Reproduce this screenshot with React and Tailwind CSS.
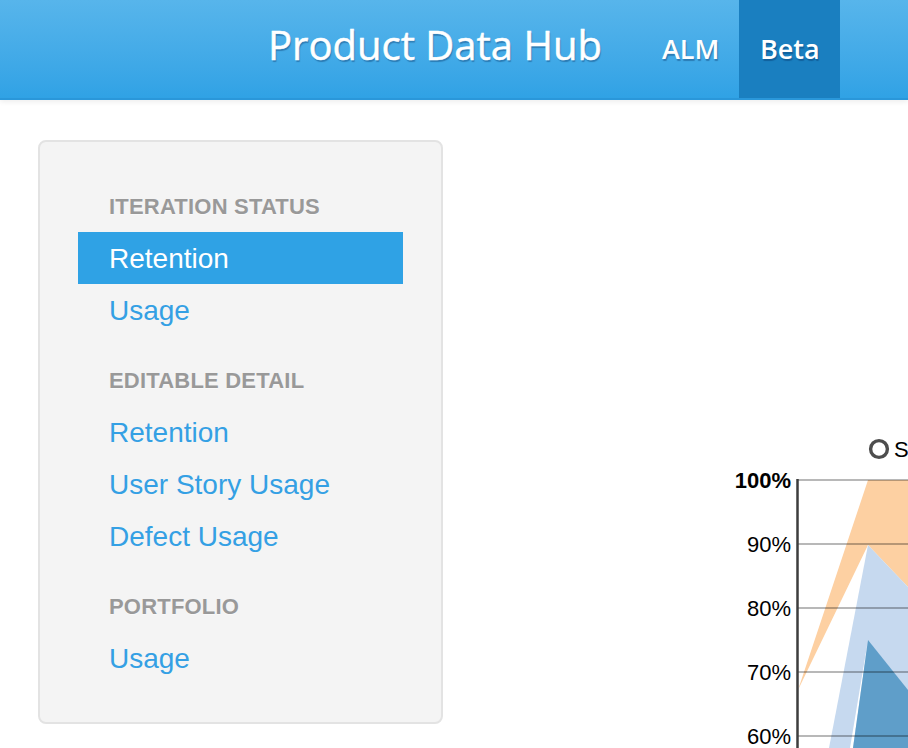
import React from "react";

const sections = [
  { title: "ITERATION STATUS", items: [{ label: "Retention", active: true }, { label: "Usage" }] },
  { title: "EDITABLE DETAIL", items: [{ label: "Retention" }, { label: "User Story Usage" }, { label: "Defect Usage" }] },
  { title: "PORTFOLIO", items: [{ label: "Usage" }] },
];

function Chart() {
  const grid = [480, 544, 608, 672, 736];
  const labels = ["100%", "90%", "80%", "70%", "60%"];
  return (
    <svg width="208" height="328" viewBox="700 420 208 328" className="block">
      <polygon points="798,690 868,480 908,480 908,587 868,545" fill="#fdd0a2" />
      <polygon points="868,545 908,587 908,748 829,748" fill="#c6d9ef" />
      <polygon points="868,640 850,748 853,748" fill="#ffffff" />
      <polygon points="868,640 908,690 908,748 853,748" fill="#5f9ec9" />
      {grid.map((y) => (
        <line key={y} x1="798" x2="908" y1={y} y2={y} stroke="rgba(0,0,0,0.28)" strokeWidth="2" />
      ))}
      <line x1="797.5" x2="797.5" y1="479" y2="748" stroke="#3d3d3d" strokeWidth="2.5" />
      {labels.map((t, i) => (
        <text
          key={t}
          x="791"
          y={grid[i] + 8}
          textAnchor="end"
          fontFamily="'Liberation Sans', Arial, sans-serif"
          fontSize="22"
          fontWeight={i === 0 ? "bold" : "normal"}
          fill="#000"
        >
          {t}
        </text>
      ))}
      <circle cx="879" cy="449" r="8.4" fill="#fff" stroke="#4d4d4d" strokeWidth="3.4" />
      <text x="894" y="457" fontFamily="'Liberation Sans', Arial, sans-serif" fontSize="22" fill="#000">
        S
      </text>
    </svg>
  );
}

export default function App() {
  return (
    <div className="w-[908px] h-[748px] overflow-hidden bg-white font-['Liberation_Sans',Arial,sans-serif]">
      <header className="h-[100px] bg-gradient-to-b from-[#57b5eb] to-[#30a2e5] border-b-2 border-[#2a97da] flex items-stretch shadow-[0_2px_5px_rgba(0,0,0,0.07)] relative z-10 font-['Open_Sans',sans-serif] text-white [text-shadow:1px_2px_1px_rgba(0,40,90,0.35)]">
        <div className="pl-[268px] pr-[40px] flex items-center pb-[8px] text-[40px] leading-none whitespace-nowrap [-webkit-text-stroke:0.5px_white]">
          Product Data Hub
        </div>
        <nav className="flex items-stretch">
          <a className="px-5 flex items-center pb-[2px] text-[27px] font-semibold leading-none">ALM</a>
          <a className="px-5 flex items-center pb-[2px] text-[27px] font-semibold leading-none bg-[#1a7fc0] w-[101px] justify-center">
            Beta
          </a>
        </nav>
      </header>
      <div className="flex items-start">
        <aside className="ml-[38px] mt-[40px] w-[405px] bg-[#f4f4f4] border-2 border-[#e3e3e3] rounded-[8px] px-[38px] py-[38px]">
          {sections.map((s, si) => (
            <div key={s.title} className={si > 0 ? "mt-[18px]" : ""}>
              <div className="h-[52px] flex items-center pl-[31px] text-[22px] font-bold text-[#999999] tracking-[0.2px] [text-shadow:0_1px_0_rgba(255,255,255,0.5)]">
                {s.title}
              </div>
              {s.items.map((it) => (
                <div
                  key={it.label}
                  className={
                    "h-[52px] flex items-center pl-[31px] pt-[2px] text-[28px] " +
                    (it.active ? "bg-[#2fa2e5] text-white" : "text-[#34a0e4]")
                  }
                >
                  {it.label}
                </div>
              ))}
            </div>
          ))}
        </aside>
        <div className="ml-[257px] mt-[320px]">
          <Chart />
        </div>
      </div>
    </div>
  );
}
